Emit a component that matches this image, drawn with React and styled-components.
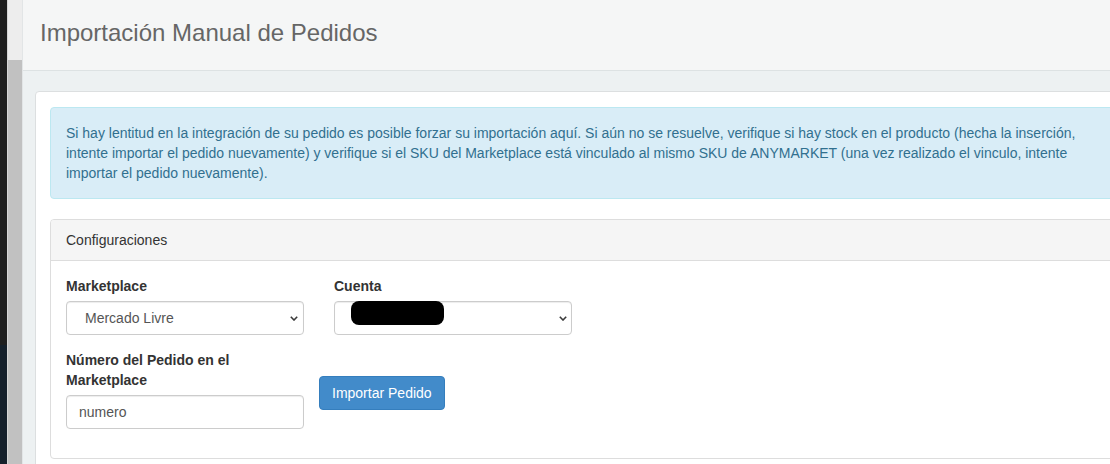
import React from "react";
import styled, { createGlobalStyle } from "styled-components";

const GlobalStyle = createGlobalStyle`
  html, body {
    margin: 0;
    padding: 0;
    width: 1110px;
    height: 464px;
    overflow: hidden;
    background: #edf1f2;
  }
  body {
    font-family: "Liberation Sans", Arial, sans-serif;
    font-size: 14px;
    line-height: 20px;
    color: #333;
  }
  * { box-sizing: border-box; }
`;

const Shell = styled.div`
  display: flex;
  height: 464px;
  overflow: hidden;
`;

const DarkStrip = styled.div`
  flex: none;
  width: 7px;
  display: flex;
  flex-direction: column;
`;

const DarkPart = styled.div`
  height: ${(p) => p.$h};
  flex: ${(p) => (p.$grow ? 1 : "none")};
  background: ${(p) => p.$bg};
`;

const Scrollbar = styled.div`
  flex: none;
  width: 15px;
  display: flex;
  flex-direction: column;
  background: #f0f0f0;
  border-left: 1px solid #d6d6d6;
`;

const ScrollTrack = styled.div`
  height: 60px;
  background: #ededed;
`;

const ScrollThumb = styled.div`
  flex: 1;
  background: #c1c1c1;
`;

const Main = styled.div`
  flex: none;
  width: 1124px;
  display: flex;
  flex-direction: column;
  background: #edf1f2;
  border-left: 1px solid #e2e5e6;
`;

const PageHeader = styled.header`
  flex: none;
  height: 71px;
  padding: 20px 0 0 17px;
  background: #f5f6f6;
  border-bottom: 1px solid #dde2e3;
`;

const Title = styled.h1`
  margin: 0;
  font-size: 24px;
  line-height: 26px;
  font-weight: 400;
  color: #666;
`;

const Content = styled.div`
  flex: none;
  padding: 20px 0 0 12px;
`;

const Card = styled.div`
  background: #fff;
  border: 1px solid #dcdfe0;
  border-radius: 4px;
  padding: 15px 14px;
`;

const Alert = styled.div`
  background: #d9edf7;
  border: 1px solid #bce8f1;
  border-radius: 4px;
  color: #31708f;
  padding: 15px;
  margin-bottom: 20px;
`;

const Panel = styled.section`
  border: 1px solid #ddd;
  border-radius: 4px;
  background: #fff;
`;

const PanelHeading = styled.div`
  background: #f5f5f5;
  border-bottom: 1px solid #ddd;
  border-radius: 3px 3px 0 0;
  padding: 10px 15px;
  color: #333;
`;

const PanelBody = styled.div`
  padding: 15px 15px 14px;
`;

const FormRow = styled.div`
  display: flex;
  gap: ${(p) => p.$gap || "30px"};
  align-items: flex-start;
`;

const FormGroup = styled.div`
  width: 238px;
  margin-bottom: 15px;
`;

const Label = styled.label`
  display: block;
  font-weight: 700;
  color: #333;
  margin-bottom: 5px;
`;

const SelectBox = styled.div`
  position: relative;
  height: 34px;
  display: flex;
  align-items: center;
  justify-content: space-between;
  padding: 0 ${(p) => p.$pr || "5px"} 0 18px;
  border: 1px solid #ccc;
  border-radius: 4px;
  background: #fff;
  color: #555;
  box-shadow: inset 0 1px 1px rgba(0, 0, 0, 0.075);
`;

const Redaction = styled.span`
  position: absolute;
  left: 16px;
  top: -1px;
  width: 93px;
  height: 24px;
  background: #000;
  border-radius: 8px;
`;

const Chevron = styled.svg`
  flex: none;
  width: 8px;
  height: 5px;
`;

const Input = styled.div`
  height: 34px;
  padding: 6px 12px;
  border: 1px solid #ccc;
  border-radius: 4px;
  color: #555;
  background: #fff;
  box-shadow: inset 0 1px 1px rgba(0, 0, 0, 0.075);
`;

const Button = styled.button`
  margin-top: 26px;
  height: 34px;
  padding: 6px 12px;
  font-family: inherit;
  font-size: 14px;
  line-height: 20px;
  color: #fff;
  background: #428bca;
  border: 1px solid #357ebd;
  border-radius: 4px;
  cursor: pointer;
`;

const ChevronIcon = () => (
  <Chevron viewBox="0 0 8 5">
    <path d="M0.8 0.8 L4 4 L7.2 0.8" fill="none" stroke="#3a3a3a" strokeWidth="1.6" />
  </Chevron>
);

export default function App() {
  return (
    <>
      <GlobalStyle />
      <Shell>
        <DarkStrip>
          <DarkPart $h="345px" $bg="#1f1f1f" />
          <DarkPart $grow $bg="#15202b" />
        </DarkStrip>
        <Scrollbar>
          <ScrollTrack />
          <ScrollThumb />
        </Scrollbar>
        <Main>
          <PageHeader>
            <Title>Importación Manual de Pedidos</Title>
          </PageHeader>
          <Content>
            <Card>
              <Alert>
                Si hay lentitud en la integración de su pedido es posible forzar su importación aquí. Si aún no se resuelve, verifique si hay stock en el producto (hecha la inserción, intente importar el pedido nuevamente) y verifique si el SKU del Marketplace está vinculado al mismo SKU de ANYMARKET (una vez realizado el vinculo, intente importar el pedido nuevamente).
              </Alert>
              <Panel>
                <PanelHeading>Configuraciones</PanelHeading>
                <PanelBody>
                  <FormRow>
                    <FormGroup>
                      <Label>Marketplace</Label>
                      <SelectBox>
                        <span>Mercado Livre</span>
                        <ChevronIcon />
                      </SelectBox>
                    </FormGroup>
                    <FormGroup>
                      <Label>Cuenta</Label>
                      <SelectBox $pr="4px">
                        <Redaction />
                        <span />
                        <ChevronIcon />
                      </SelectBox>
                    </FormGroup>
                  </FormRow>
                  <FormRow $gap="15px">
                    <FormGroup>
                      <Label>Número del Pedido en el Marketplace</Label>
                      <Input>numero</Input>
                    </FormGroup>
                    <Button>Importar Pedido</Button>
                  </FormRow>
                </PanelBody>
              </Panel>
            </Card>
          </Content>
        </Main>
      </Shell>
    </>
  );
}
